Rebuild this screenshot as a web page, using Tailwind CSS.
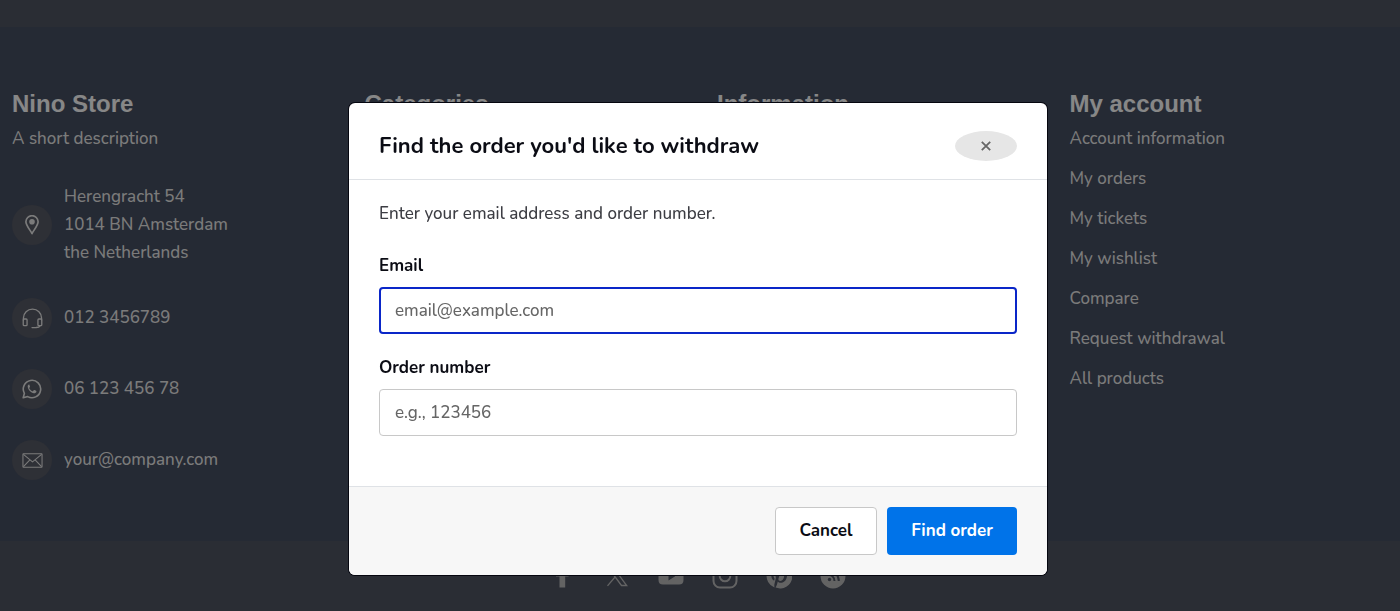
<!DOCTYPE html>
<html lang="en">
<head>
  <meta charset="UTF-8">
  <meta name="viewport" content="width=device-width, initial-scale=1">
  <title>Nino Store</title>
  <script src="https://cdn.jsdelivr.net/npm/@tailwindcss/browser@4"></script>
</head>
<body class="bg-[#464b58] min-h-screen font-['Nunito','Lato',sans-serif] text-[17px] leading-7 text-[#cdcdcd]">

  <!-- Footer -->
  <footer class="font-medium">
    <div class="h-[27px]"></div>
    <div class="bg-[#3f4657] px-3 pt-[63px] pb-[61px] grid grid-cols-4 gap-x-[34px]">
      <div>
        <h2 class="font-['Liberation_Sans',sans-serif] font-bold text-2xl leading-7 text-[#e1e1e1] mb-[7px]">Nino Store</h2>
        <p class="mb-[30px]">A short description</p>
        <ul class="flex flex-col gap-[31px]">
          <li class="flex items-center gap-3">
            <span class="size-10 rounded-full bg-[#4d505a] flex items-center justify-center">
              <svg class="size-5" viewBox="0 0 20 20" fill="none" stroke="currentColor" stroke-width="1.700" stroke-linejoin="round"><path d="M10 18.500C8.500 15.500 3.900 10.500 3.900 6.800a6.100 6.100 0 0 1 12.200 0C16.100 10.500 11.500 15.500 10 18.500Z"/><circle cx="10" cy="6.800" r="2.800" fill="currentColor" stroke="none"/></svg>
            </span>
            <address class="not-italic">Herengracht 54<br>1014 BN Amsterdam<br>the Netherlands</address>
          </li>
          <li class="flex items-center gap-3">
            <span class="size-10 rounded-full bg-[#4d505a] flex items-center justify-center">
              <svg class="size-[21px]" viewBox="0 0 22 22" fill="none" stroke="currentColor" stroke-width="1.400" stroke-linecap="round" stroke-linejoin="round"><path d="M1.500 12.500V10.500a9.500 9.300 0 0 1 19 0v2"/><rect x="1.300" y="11.500" width="4" height="7" rx="1"/><rect x="16.700" y="11.500" width="4" height="7" rx="1"/><path d="M19 18.500c-.6 1.300-2 1.900-4 1.900M10.500 20.500h4" /></svg>
            </span>
            <a href="tel:0123456789">012 3456789</a>
          </li>
          <li class="flex items-center gap-3">
            <span class="size-10 rounded-full bg-[#4d505a] flex items-center justify-center">
              <svg class="size-5" viewBox="0 0 20 20" fill="none" stroke="currentColor" stroke-width="1.600" stroke-linejoin="round"><path d="M1.200 18.800l1.200-4.500a8.700 8.700 0 1 1 3.300 3.300z"/><path fill="currentColor" stroke="none" d="M7 5.600c-.9.300-1.400 1.200-1.300 2.200.3 3 3.200 6.100 6.200 6.500 1.200.1 2.200-.5 2.500-1.500.1-.5 0-.8-.3-1l-1.600-.8c-.3-.1-.6 0-.8.300l-.6.800c-.2.200-.4.200-.7.100-1.400-.6-2.400-1.600-3.100-2.900-.1-.2-.1-.4.100-.6l.5-.6c.2-.2.200-.4.100-.6L7.500 5.900C7.400 5.600 7.300 5.500 7 5.600z"/></svg>
            </span>
            <a href="https://wa.me/0612345678">06 123 456 78</a>
          </li>
          <li class="flex items-center gap-3">
            <span class="size-10 rounded-full bg-[#4d505a] flex items-center justify-center">
              <svg class="size-[21px]" viewBox="0 0 22 22" fill="none" stroke="currentColor" stroke-width="1.100" stroke-linejoin="round"><rect x="1" y="4" width="20" height="14" rx=".5"/><path d="M1.500 4.500l9.500 8 9.500-8M1.500 17.500l6.500-7M20.500 17.500l-6.500-7"/></svg>
            </span>
            <a href="mailto:your@company.com">your@company.com</a>
          </li>
        </ul>
      </div>
      <div>
        <h2 class="font-['Liberation_Sans',sans-serif] font-bold text-2xl leading-7 text-[#e1e1e1]">Categories</h2>
      </div>
      <div>
        <h2 class="font-['Liberation_Sans',sans-serif] font-bold text-2xl leading-7 text-[#e1e1e1]">Information</h2>
      </div>
      <div>
        <h2 class="font-['Liberation_Sans',sans-serif] font-bold text-2xl leading-7 text-[#e1e1e1] mb-[7px]">My account</h2>
        <ul class="flex flex-col gap-3">
          <li><a href="#">Account information</a></li>
          <li><a href="#">My orders</a></li>
          <li><a href="#">My tickets</a></li>
          <li><a href="#">My wishlist</a></li>
          <li><a href="#">Compare</a></li>
          <li><a href="#">Request withdrawal</a></li>
          <li><a href="#">All products</a></li>
        </ul>
      </div>
    </div>

    <!-- Social links -->
    <div class="flex justify-center gap-7 py-[22px] pr-1 text-[#a6a6a6]">
      <a href="#" aria-label="Facebook"><svg class="size-[26px]" viewBox="0 0 26 26" fill="currentColor"><path d="M9.500 24.500V13.500H6V9h3.500V6.500C9.500 2.800 12 1 15.500 1H19v4.300h-2.500c-1.500 0-1.800.8-1.800 1.900V9h4.300l-.5 4.500h-3.300v11z"/></svg></a>
      <a href="#" aria-label="X"><svg class="size-[26px]" viewBox="0 0 26 26" fill="none" stroke="currentColor" stroke-width="1.300"><path d="M3.500 3.600h5.200l14 18.900h-5.200zM22 3.500l-8 9M11.500 13.500L3.500 22.800"/></svg></a>
      <a href="#" aria-label="YouTube"><svg class="size-[26px]" viewBox="0 0 26 26" fill="currentColor" fill-rule="evenodd"><path d="M5 4h16c3 0 4.500 1.500 4.500 4.500v8.500c0 3-1.500 4.500-4.500 4.500H5c-3 0-4.500-1.500-4.500-4.500V8.500c0-3 1.500-4.500 4.500-4.500zM10.500 9.200v8.200l6.700-4.100z"/></svg></a>
      <a href="#" aria-label="Instagram"><svg class="size-[26px]" viewBox="0 0 26 26" fill="none" stroke="currentColor" stroke-width="2"><rect x="1.500" y="1.500" width="23" height="23" rx="6.500"/><circle cx="13" cy="13" r="5.300"/><circle cx="19.500" cy="6.500" r=".8"/></svg></a>
      <a href="#" aria-label="Pinterest"><svg class="size-[26px]" viewBox="0 0 24 24" fill="currentColor"><path d="M12 .5a11.500 11.500 0 0 0-4.200 22.200c-.1-.9-.2-2.300 0-3.300l1.400-5.700s-.3-.7-.3-1.700c0-1.600.9-2.800 2.100-2.800 1 0 1.400.7 1.400 1.600 0 1-.6 2.500-.9 3.800-.3 1.100.6 2 1.700 2 2 0 3.600-2.100 3.600-5.200 0-2.700-2-4.600-4.700-4.600-3.200 0-5.100 2.400-5.100 4.900 0 1 .4 2 .8 2.600.1.100.1.200.1.300l-.3 1.300c-.1.200-.2.300-.4.200-1.400-.7-2.300-2.700-2.300-4.400 0-3.600 2.600-6.900 7.500-6.900 3.900 0 7 2.800 7 6.500 0 3.900-2.500 7-5.900 7-1.100 0-2.200-.6-2.600-1.300l-.7 2.700c-.3 1-.9 2.200-1.400 3A11.500 11.500 0 1 0 12 .5z"/></svg></a>
      <a href="#" aria-label="RSS"><svg class="size-[26px]" viewBox="0 0 26 26"><circle cx="13" cy="13" r="12.500" fill="currentColor"/><circle cx="9.500" cy="16.500" r="1.700" fill="#464b58"/><path d="M8 11.500a6.500 6.500 0 0 1 6.500 6.500M8 7.200A10.800 10.800 0 0 1 18.800 18" fill="none" stroke="#464b58" stroke-width="2"/></svg></a>
    </div>
  </footer>

  <!-- Withdrawal dialog -->
  <div id="overlay" class="fixed inset-0 bg-black/40 flex items-start justify-center pt-[103px] pr-1">
    <form role="dialog" aria-modal="true" aria-labelledby="dialogTitle" class="w-full max-w-[698px] bg-white rounded-md overflow-hidden shadow-[0_0_0_1px_#05060f] text-[#0b0c14]">
      <div class="flex items-center justify-between px-[30px] pt-7 pb-[18px] border-b border-[#dfe2e6]">
        <h1 id="dialogTitle" class="text-[22px] leading-[30px] font-bold">Find the order you'd like to withdraw</h1>
        <button type="button" aria-label="Close" class="close w-[62px] h-[30px] rounded-[50%] bg-[#e6e6e6] text-[#666] flex items-center justify-center">
          <svg class="size-2.5" viewBox="0 0 10 10" fill="none" stroke="currentColor" stroke-width="1.800"><path d="M.8.8l8.400 8.400M9.200.8L.8 9.200"/></svg>
        </button>
      </div>

      <div class="px-[30px] pt-5 pb-[50px]">
        <p class="leading-7 font-medium text-[#3c3d43] mb-[25px]">Enter your email address and order number.</p>
        <div class="flex flex-col gap-[21px]">
          <div>
            <label for="email" class="block font-bold leading-[26px] mb-2">Email</label>
            <input id="email" type="email" placeholder="email@example.com" class="block w-full h-[47px] px-3.5 border-2 border-[#0a26c8] rounded font-medium placeholder:text-[#666] outline-none">
          </div>
          <div>
            <label for="orderNumber" class="block font-bold leading-[26px] mb-2">Order number</label>
            <input id="orderNumber" type="text" placeholder="e.g., 123456" class="block w-full h-[47px] px-[15px] border border-[#c8c8c8] rounded font-medium placeholder:text-[#666] outline-none">
          </div>
        </div>
      </div>

      <div class="flex justify-end gap-2.5 px-[30px] py-5 bg-[#f7f7f7] border-t border-[#dfe2e6]">
        <button type="button" class="close h-12 w-[102px] bg-white border border-[#c8c8c8] rounded font-bold">Cancel</button>
        <button type="submit" class="h-12 w-[130px] bg-[#0073e9] text-white rounded font-bold">Find order</button>
      </div>
    </form>
  </div>

  <script>
    const overlay = document.getElementById('overlay');

    document.querySelectorAll('.close').forEach(btn => {
      btn.addEventListener('click', () => overlay.remove());
    });
  </script>

</body>
</html>
